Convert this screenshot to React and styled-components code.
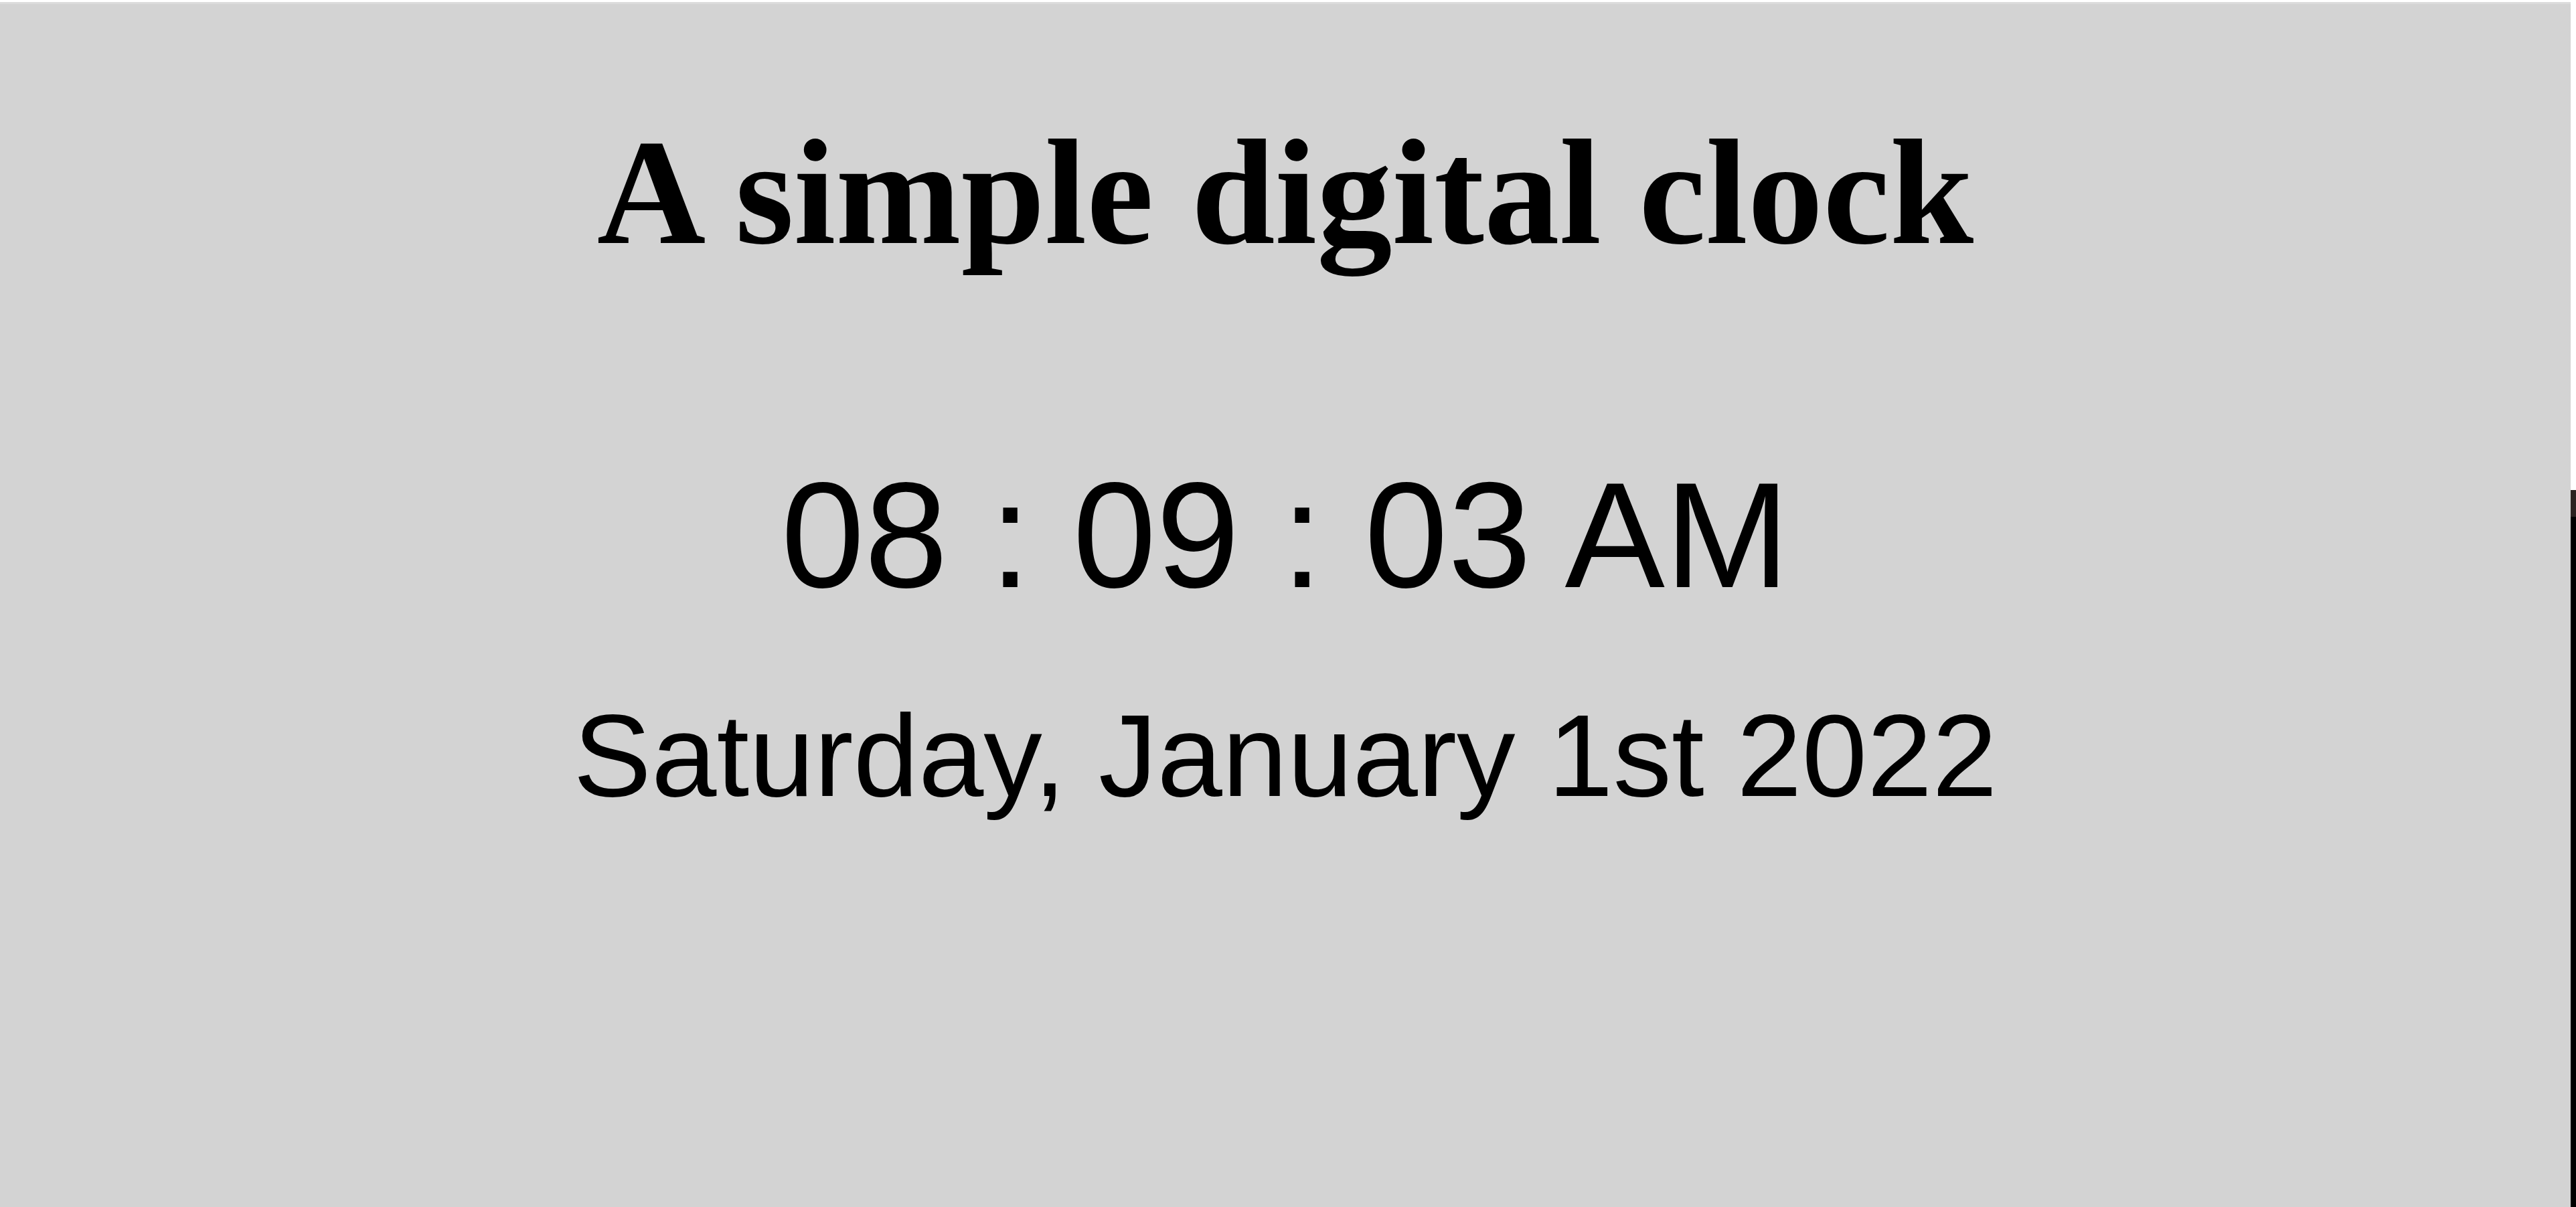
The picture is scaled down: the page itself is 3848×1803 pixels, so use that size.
import React from "react";
import styled, { createGlobalStyle } from "styled-components";

const Global = createGlobalStyle`
  html, body { margin: 0; padding: 0; background: #ffffff; }
  body { font-family: "Liberation Serif", "Times New Roman", serif; }
`;

const Page = styled.div`
  display: flex;
  flex-direction: row;
  height: 100vh;
  overflow: hidden;
`;

const Panel = styled.main`
  flex: 1;
  margin-top: 3px;
  border-top: 3px solid #dcdcdc;
  background: #d3d3d3;
  display: flex;
  flex-direction: column;
  align-items: center;
  color: #000;
`;

const Title = styled.h1`
  margin: 151px 0 0;
  font-family: "Liberation Serif", "Times New Roman", serif;
  font-weight: 700;
  font-size: 225px;
  line-height: normal;
`;

const Clock = styled.div`
  margin-top: 254px;
  font-family: "Liberation Sans", Arial, sans-serif;
  font-size: 224px;
  line-height: normal;
  white-space: pre;
`;

const DateLine = styled.div`
  margin-top: 100px;
  font-family: "Liberation Sans", Arial, sans-serif;
  font-size: 175px;
  line-height: normal;
  white-space: pre;
`;

const Side = styled.aside`
  width: 8px;
  display: flex;
  flex-direction: column;
`;

const SideSegment = styled.div`
  height: ${(p) => (p.$h ? `${p.$h}px` : "auto")};
  flex: ${(p) => (p.$h ? "none" : 1)};
  background: ${(p) => p.$bg};
`;

export default function App() {
  return (
    <>
      <Global />
      <Page>
        <Panel>
          <Title>A simple digital clock</Title>
          <Clock>08 : 09 : 03 AM</Clock>
          <DateLine>Saturday, January 1st 2022</DateLine>
        </Panel>
        <Side>
          <SideSegment $h={732} $bg="#ffffff" />
          <SideSegment $h={40} $bg="#2b2220" />
          <SideSegment $bg="#000000" />
        </Side>
      </Page>
    </>
  );
}
